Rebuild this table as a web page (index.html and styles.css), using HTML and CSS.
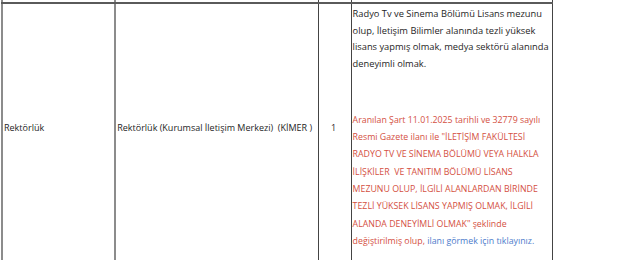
FILE: index.html
```html
<!DOCTYPE html>
<html lang="tr">
<head>
<meta charset="utf-8">
<link rel="stylesheet" href="styles.css">
</head>
<body>
<table class="grid">
  <tr class="prev">
    <td class="c1"></td><td class="c2"></td><td class="c3"></td><td class="c4"></td>
  </tr>
  <tr class="row">
    <td class="c1 mid">Rektörlük</td>
    <td class="c2 mid">Rektörlük (Kurumsal İletişim Merkezi)&nbsp; (KİMER )</td>
    <td class="c3 mid center">1</td>
    <td class="c4 desc">
      <p class="plain">Radyo Tv ve Sinema Bölümü Lisans mezunu olup, İletişim Bilimler alanında tezli yüksek lisans yapmış olmak, medya sektörü alanında deneyimli olmak.</p>
      <p class="note">Aranılan Şart 11.01.2025 tarihli ve 32779 sayılı Resmi Gazete ilanı ile "İLETİŞİM FAKÜLTESİ RADYO TV VE SİNEMA BÖLÜMÜ VEYA HALKLA İLİŞKİLER&nbsp; VE TANITIM BÖLÜMÜ LİSANS MEZUNU OLUP, İLGİLİ ALANLARDAN BİRİNDE TEZLİ YÜKSEK LİSANS YAPMIŞ OLMAK, İLGİLİ ALANDA DENEYİMLİ OLMAK" şeklinde değiştirilmiş olup, <a class="link" href="#">ilanı görmek için tıklayınız.</a></p>
    </td>
  </tr>
</table>
</body>
</html>
```

FILE: styles.css
```css
html, body {
  margin: 0;
  padding: 0;
  background: #ffffff;
}
body {
  font-family: "Open Sans", "DejaVu Sans", sans-serif;
  font-size: 9px;
  color: #1e1e1e;
}
.grid {
  border-collapse: collapse;
  table-layout: fixed;
  width: 552px;
  margin: -10px 0 0 1px;
}
.grid td {
  padding: 0 1px;
  vertical-align: top;
  color: #1e1e1e;
}
.prev td {
  height: 12px;
  border-bottom: 2px solid #5a5a5a;
}
.c1 {
  width: 109px;
  border-left: 2px solid #8c8c8c;
  border-right: 2px solid #8c8c8c;
}
.c2 {
  width: 199px;
  border-right: 1px solid #444444;
}
.c3 {
  width: 30px;
  border-right: 1px solid #444444;
}
.c4 {
  width: 198px;
  border-right: 1px solid #444444;
}
.grid td.mid {
  vertical-align: top;
  padding-top: 117px;
}
.grid td.center {
  text-align: center;
  padding-right: 3px;
}
.desc p {
  margin: 0;
}
.plain {
  font-size: 9.3px;
  line-height: 16.7px;
  padding-top: 2px;
  margin-bottom: 39px !important;
}
.note {
  font-size: 8.8px;
  line-height: 17.3px;
  color: #d4503f;
  padding-bottom: 30px;
}
.link {
  color: #4d7ccc;
  text-decoration: none;
}
```
